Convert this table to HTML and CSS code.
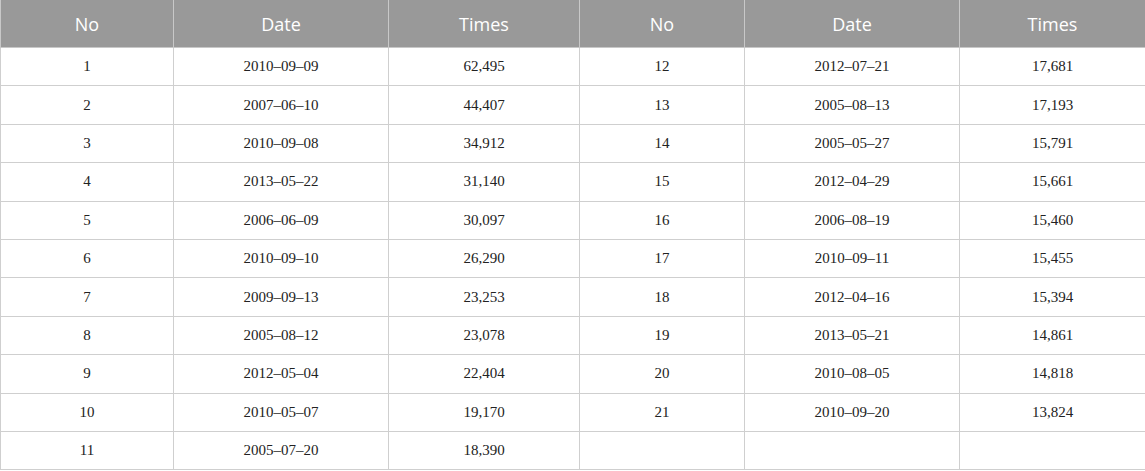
FILE: index.html
```html
<!DOCTYPE html>
<html>
<head>
<meta charset="utf-8">
<link rel="stylesheet" href="styles.css">
</head>
<body>
<table class="data">
<colgroup>
<col class="c1"><col class="c2"><col class="c3"><col class="c4"><col class="c5"><col class="c6">
</colgroup>
<thead>
<tr><th>No</th><th>Date</th><th>Times</th><th>No</th><th>Date</th><th>Times</th></tr>
</thead>
<tbody>
<tr><td>1</td><td>2010–09–09</td><td>62,495</td><td>12</td><td>2012–07–21</td><td>17,681</td></tr>
<tr><td>2</td><td>2007–06–10</td><td>44,407</td><td>13</td><td>2005–08–13</td><td>17,193</td></tr>
<tr><td>3</td><td>2010–09–08</td><td>34,912</td><td>14</td><td>2005–05–27</td><td>15,791</td></tr>
<tr><td>4</td><td>2013–05–22</td><td>31,140</td><td>15</td><td>2012–04–29</td><td>15,661</td></tr>
<tr><td>5</td><td>2006–06–09</td><td>30,097</td><td>16</td><td>2006–08–19</td><td>15,460</td></tr>
<tr><td>6</td><td>2010–09–10</td><td>26,290</td><td>17</td><td>2010–09–11</td><td>15,455</td></tr>
<tr><td>7</td><td>2009–09–13</td><td>23,253</td><td>18</td><td>2012–04–16</td><td>15,394</td></tr>
<tr><td>8</td><td>2005–08–12</td><td>23,078</td><td>19</td><td>2013–05–21</td><td>14,861</td></tr>
<tr><td>9</td><td>2012–05–04</td><td>22,404</td><td>20</td><td>2010–08–05</td><td>14,818</td></tr>
<tr><td>10</td><td>2010–05–07</td><td>19,170</td><td>21</td><td>2010–09–20</td><td>13,824</td></tr>
<tr><td>11</td><td>2005–07–20</td><td>18,390</td><td></td><td></td><td></td></tr>
</tbody>
</table>
</body>
</html>
```
FILE: styles.css
```css
html, body {
  margin: 0;
  padding: 0;
  background: #ffffff;
}
.data {
  border-collapse: collapse;
  table-layout: fixed;
  width: 1145px;
}
.c1 { width: 173px; }
.c2 { width: 215px; }
.c3 { width: 191px; }
.c4 { width: 165px; }
.c5 { width: 215px; }
.c6 { width: 186px; }
.data th {
  background: #999999;
  color: #ffffff;
  font-family: "Open Sans", "Noto Sans", sans-serif;
  font-weight: 400;
  font-size: 18px;
  height: 47px;
  padding: 0;
  text-align: center;
  vertical-align: middle;
  border: 1px solid #c8c8c8;
  border-top: none;
}
.data td {
  font-family: "Liberation Serif", "Times New Roman", serif;
  font-size: 15px;
  color: #222222;
  height: 37.4px;
  padding: 0;
  text-align: center;
  vertical-align: middle;
  border: 1px solid #cfcfcf;
}
```
